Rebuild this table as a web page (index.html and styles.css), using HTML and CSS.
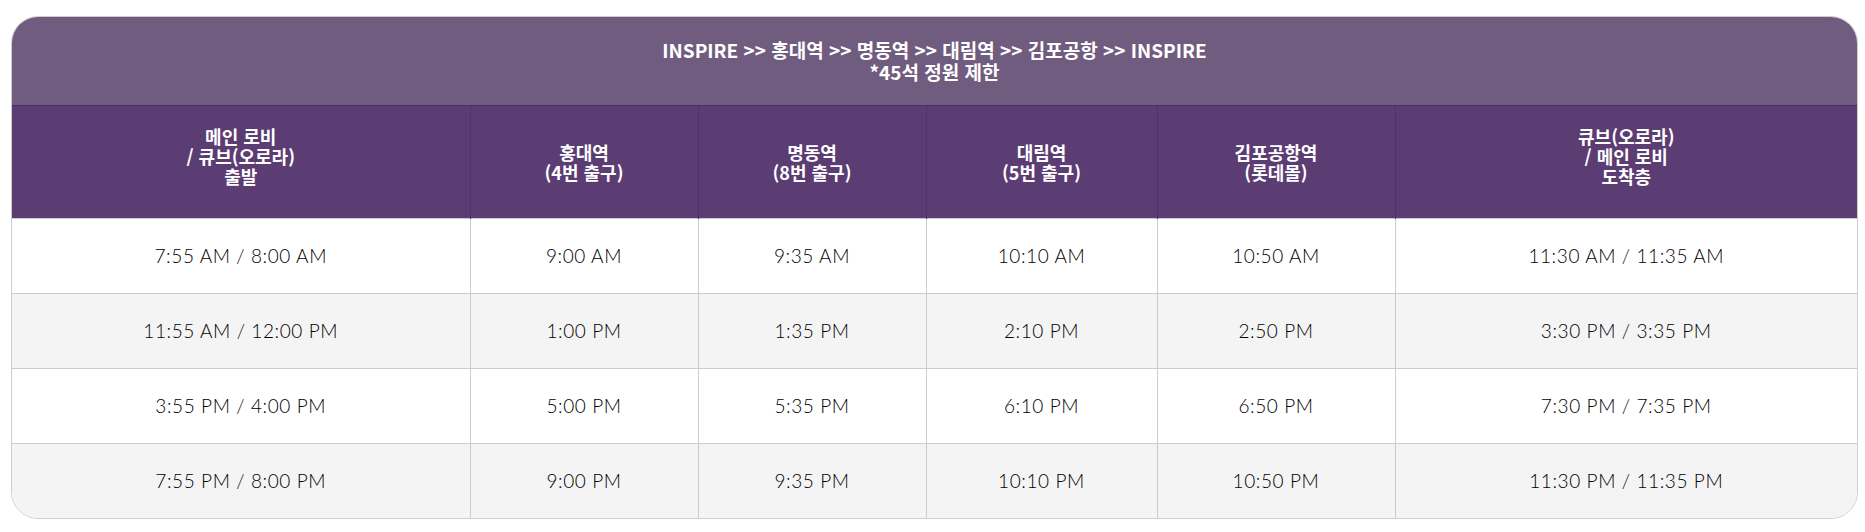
FILE: index.html
```html
<!DOCTYPE html>
<html lang="ko">
<head>
    <meta charset="utf-8" />
    <meta name="viewport" content="width=device-width, initial-scale=1.0" />
    <title>셔틀버스 시간표</title>
    <link rel="stylesheet" href="styles.css">
</head>
<body>
    <div class="timetable">
        <table>
            <colgroup>
                <col class="col-wide-start">
                <col class="col-a">
                <col class="col-a">
                <col class="col-b">
                <col class="col-c">
                <col class="col-wide-end">
            </colgroup>
            <thead>
                <tr class="route-row">
                    <th colspan="6">
                        INSPIRE &gt;&gt; 홍대역 &gt;&gt; 명동역 &gt;&gt; 대림역 &gt;&gt; 김포공항 &gt;&gt; INSPIRE<br>
                        *45석 정원 제한
                    </th>
                </tr>
                <tr class="stop-row">
                    <th class="three-line">메인 로비<br>/ 큐브(오로라)<br>출발</th>
                    <th>홍대역<br>(4번 출구)</th>
                    <th>명동역<br>(8번 출구)</th>
                    <th>대림역<br>(5번 출구)</th>
                    <th>김포공항역<br>(롯데몰)</th>
                    <th class="three-line">큐브(오로라)<br>/ 메인 로비<br>도착층</th>
                </tr>
            </thead>
            <tbody>
                <tr>
                    <td>7:55 AM / 8:00 AM</td>
                    <td>9:00 AM</td>
                    <td>9:35 AM</td>
                    <td>10:10 AM</td>
                    <td>10:50 AM</td>
                    <td>11:30 AM / 11:35 AM</td>
                </tr>
                <tr>
                    <td>11:55 AM / 12:00 PM</td>
                    <td>1:00 PM</td>
                    <td>1:35 PM</td>
                    <td>2:10 PM</td>
                    <td>2:50 PM</td>
                    <td>3:30 PM / 3:35 PM</td>
                </tr>
                <tr>
                    <td>3:55 PM / 4:00 PM</td>
                    <td>5:00 PM</td>
                    <td>5:35 PM</td>
                    <td>6:10 PM</td>
                    <td>6:50 PM</td>
                    <td>7:30 PM / 7:35 PM</td>
                </tr>
                <tr>
                    <td>7:55 PM / 8:00 PM</td>
                    <td>9:00 PM</td>
                    <td>9:35 PM</td>
                    <td>10:10 PM</td>
                    <td>10:50 PM</td>
                    <td>11:30 PM / 11:35 PM</td>
                </tr>
            </tbody>
        </table>
    </div>
</body>
</html>
```

FILE: styles.css
```css
body {
    margin: 0;
    padding: 16px 7px 0 11px;
    background: white;
    font-family: 'Noto Sans CJK KR', sans-serif;
}

.timetable {
    border: 1px solid #cfcfcf;
    border-radius: 27px;
    overflow: hidden;
}

table {
    width: 100%;
    border-collapse: collapse;
    table-layout: fixed;
}

.col-wide-start { width: 458px; }
.col-a { width: 228px; }
.col-b { width: 231px; }
.col-c { width: 238px; }

th {
    color: white;
    font-weight: 700;
    text-align: center;
    padding: 0;
}

.route-row {
    height: 88px;
}

.route-row th {
    background: #705c7f;
    font-size: 19px;
    line-height: 22px;
}

.stop-row {
    height: 113px;
}

.stop-row th {
    background: #5b3c73;
    font-size: 18px;
    line-height: 20px;
    border-top: 1px solid #4b2d63;
    border-left: 1px solid #4f3267;
}

.stop-row th.three-line {
    padding-bottom: 11px;
}

.stop-row th:first-child {
    border-left: none;
}

tbody tr {
    height: 75px;
}

td {
    padding: 0;
    text-align: center;
    font-family: 'Lato', sans-serif;
    font-weight: 300;
    font-size: 19px;
    letter-spacing: 0.6px;
    color: #000;
    border-top: 1px solid #cccccc;
    border-left: 1px solid #cccccc;
}

td:first-child {
    border-left: none;
}

tbody tr:nth-child(even) td {
    background: #f4f4f4;
}
```
